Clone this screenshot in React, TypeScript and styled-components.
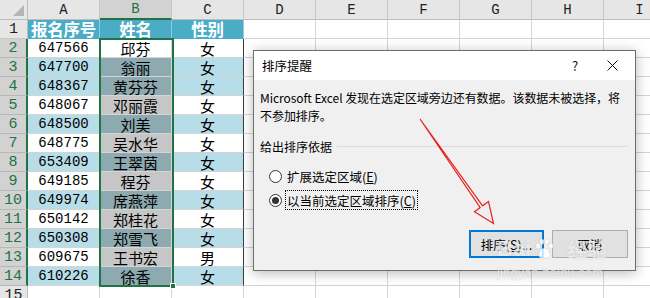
import styled, { createGlobalStyle } from "styled-components";

const GlobalStyle = createGlobalStyle`
  html, body {
    margin: 0;
    padding: 0;
    width: 650px;
    height: 298px;
    overflow: hidden;
    background: #ffffff;
  }
  * { box-sizing: border-box; }
`;

const GREEN = "#217346";
const GRID = "#d4d4d4";
const TEAL = "#4bacc6";
const BAND = "#b7dde8";

const rows = [
  ["647566", "邱芬", "女"],
  ["647700", "翁丽", "女"],
  ["648367", "黄芬芬", "女"],
  ["648067", "邓丽霞", "女"],
  ["648500", "刘美", "女"],
  ["648775", "吴水华", "女"],
  ["653409", "王翠茵", "女"],
  ["649185", "程芬", "女"],
  ["649974", "席燕萍", "女"],
  ["650142", "郑桂花", "女"],
  ["650308", "郑雪飞", "女"],
  ["609675", "王书宏", "男"],
  ["610226", "徐香", "女"],
];

const columns = ["A", "B", "C", "D", "E", "F", "G", "H", "I"];

const Stage = styled.div`
  position: relative;
  width: 650px;
  height: 298px;
  overflow: hidden;
`;

const Sheet = styled.div`
  display: grid;
  grid-template-columns: 28px repeat(9, 72px);
  grid-template-rows: 20px repeat(15, 19px);
`;

const Corner = styled.div`
  position: relative;
  background: #e6e6e6;
  border-right: 1px solid #bdbdbd;
  border-bottom: 1px solid #bdbdbd;
  &::after {
    content: "";
    position: absolute;
    right: 3px;
    bottom: 3px;
    width: 0;
    height: 0;
    border-left: 11px solid transparent;
    border-bottom: 11px solid #b5b5b5;
  }
`;

const ColHeader = styled.div<{ $active?: boolean }>`
  display: flex;
  align-items: center;
  justify-content: center;
  line-height: 1;
  background: ${(p) => (p.$active ? "#d2d2d2" : "#e6e6e6")};
  color: ${(p) => (p.$active ? GREEN : "#222")};
  border-right: 1px solid #c8c8c8;
  border-bottom: ${(p) => (p.$active ? `2px solid ${GREEN}` : "1px solid #bdbdbd")};
  font-family: "Liberation Mono", monospace;
  font-size: 14px;
`;

const RowHeader = styled.div<{ $active?: boolean }>`
  display: flex;
  align-items: center;
  justify-content: center;
  line-height: 1;
  background: ${(p) => (p.$active ? "#d2d2d2" : "#e6e6e6")};
  color: ${(p) => (p.$active ? GREEN : "#222")};
  border-bottom: 1px solid ${(p) => (p.$active ? "#b8b8b8" : "#c8c8c8")};
  border-right: ${(p) => (p.$active ? `2px solid ${GREEN}` : "1px solid #bdbdbd")};
  font-family: "Liberation Mono", monospace;
  font-size: 15px;
`;

const TitleCell = styled.div`
  display: flex;
  align-items: center;
  justify-content: center;
  line-height: 1;
  background: ${TEAL};
  color: #ffffff;
  font-family: "Noto Sans CJK SC", sans-serif;
  font-weight: 700;
  font-size: 16.5px;
  letter-spacing: -0.3px;
  border-right: 1px solid #8fcbdc;
  white-space: nowrap;
`;

const Cell = styled.div<{ $bg?: string; $num?: boolean; $edge?: boolean }>`
  display: flex;
  align-items: center;
  justify-content: center;
  line-height: 1;
  background: ${(p) => p.$bg ?? "#ffffff"};
  border-right: 1px solid ${(p) => (p.$edge ? "#3c3c3c" : GRID)};
  border-bottom: 1px solid ${GRID};
  color: #000;
  font-family: ${(p) =>
    p.$num ? '"Liberation Mono", monospace' : '"Noto Sans CJK SC", sans-serif'};
  font-size: ${(p) => (p.$num ? "14px" : "15px")};
  white-space: nowrap;
`;

const Selection = styled.div`
  position: absolute;
  left: 99px;
  top: 38px;
  width: 75px;
  height: 249px;
  border: 2px solid ${GREEN};
  pointer-events: none;
`;

const FillHandle = styled.div`
  position: absolute;
  left: 170px;
  top: 283px;
  width: 6px;
  height: 6px;
  background: ${GREEN};
  border: 1px solid #ffffff;
`;

const Dialog = styled.div`
  position: absolute;
  left: 253px;
  top: 50px;
  width: 383px;
  height: 221px;
  border: 1px solid #6e6e6e;
  background: #f0f0f0;
  box-shadow: 0 2px 12px rgba(0, 0, 0, 0.28);
  display: flex;
  flex-direction: column;
  font-family: "Noto Sans CJK SC", sans-serif;
  font-size: 12px;
  color: #000;
`;

const TitleBar = styled.div`
  height: 29px;
  background: #ffffff;
  display: flex;
  align-items: center;
  padding-left: 8px;
`;

const TitleText = styled.span`
  flex: 1;
  font-size: 12.5px;
`;

const TitleButton = styled.span<{ $w: number }>`
  width: ${(p) => p.$w}px;
  display: flex;
  justify-content: center;
  font-size: 13px;
  color: #111;
`;

const Body = styled.div`
  flex: 1;
  display: flex;
  flex-direction: column;
  padding: 9px 7px 0 6px;
`;

const Message = styled.p`
  margin: 0;
  line-height: 17.5px;
  letter-spacing: -0.05px;
`;

const GroupLabel = styled.div`
  display: flex;
  align-items: center;
  margin-top: 13px;
  height: 18px;
  &::after {
    content: "";
    flex: 1;
    height: 1px;
    background: #dcdcdc;
    margin-left: 5px;
  }
`;

const Options = styled.div`
  display: flex;
  flex-direction: column;
  gap: 2px;
  margin-top: 10px;
  padding-left: 9px;
`;

const OptionRow = styled.div`
  display: flex;
  align-items: center;
  height: 22px;
  gap: 3px;
`;

const Radio = styled.span<{ $checked?: boolean }>`
  width: 13px;
  height: 13px;
  border-radius: 50%;
  border: 1px solid #333;
  background: #fff;
  display: flex;
  align-items: center;
  justify-content: center;
  &::after {
    content: "";
    width: 7px;
    height: 7px;
    border-radius: 50%;
    background: ${(p) => (p.$checked ? "#333" : "transparent")};
  }
`;

const OptionLabel = styled.span<{ $focused?: boolean }>`
  display: flex;
  align-items: center;
  height: 20px;
  padding: 0 1px;
  border: 1px dotted ${(p) => (p.$focused ? "#000" : "transparent")};
  font-size: 12.5px;
`;

const Key = styled.span`
  text-decoration: underline;
`;

const Buttons = styled.div`
  display: flex;
  justify-content: flex-end;
  gap: 8px;
  margin-top: 19px;
`;

const Button = styled.div<{ $primary?: boolean }>`
  width: ${(p) => (p.$primary ? 75 : 76)}px;
  height: 28px;
  display: flex;
  align-items: center;
  justify-content: center;
  background: #e1e1e1;
  border: ${(p) => (p.$primary ? "2px solid #0078d7" : "1px solid #adadad")};
  font-size: 12.5px;
`;

const Arrow = styled.svg`
  position: absolute;
  left: 0;
  top: 0;
  pointer-events: none;
`;

const Watermark = styled.div`
  position: absolute;
  left: 497px;
  top: 236px;
  display: flex;
  flex-direction: column;
  align-items: flex-start;
  color: rgba(255, 255, 255, 0.72);
  text-shadow: 0 0 1px rgba(0, 0, 0, 0.2);
  pointer-events: none;
`;

const Brand = styled.div`
  display: flex;
  align-items: center;
  gap: 2px;
  font-family: "Liberation Sans", sans-serif;
  font-weight: 700;
  font-size: 22px;
  height: 26px;
`;

const BrandCn = styled.span`
  font-family: "Noto Sans CJK SC", sans-serif;
  font-weight: 700;
  font-size: 20px;
  margin-left: 10px;
`;

const Url = styled.div`
  font-family: "Liberation Sans", sans-serif;
  font-size: 12.5px;
  letter-spacing: 0.3px;
  margin-top: 4px;
`;

function bandFor(rowNum: number) {
  return rowNum === 3 || (rowNum >= 4 && rowNum % 2 === 0);
}

export default function App() {
  return (
    <Stage>
      <GlobalStyle />
      <Sheet>
        <Corner />
        {columns.map((c) => (
          <ColHeader key={c} $active={c === "B"}>
            {c}
          </ColHeader>
        ))}

        <RowHeader>1</RowHeader>
        <TitleCell>报名序号</TitleCell>
        <TitleCell>姓名</TitleCell>
        <TitleCell>性别</TitleCell>
        {columns.slice(3).map((c) => (
          <Cell key={"1" + c} />
        ))}

        {rows.map((r, i) => {
          const rowNum = i + 2;
          const band = bandFor(rowNum);
          const base = band ? BAND : "#ffffff";
          const sel = rowNum === 2 ? "#ffffff" : band ? "#8eaab1" : "#c6c6c6";
          return [
            <RowHeader key={"h" + rowNum} $active>
              {rowNum}
            </RowHeader>,
            <Cell key={"a" + rowNum} $bg={base} $num>
              {r[0]}
            </Cell>,
            <Cell key={"b" + rowNum} $bg={sel}>
              {r[1]}
            </Cell>,
            <Cell key={"c" + rowNum} $bg={base} $edge>
              {r[2]}
            </Cell>,
            ...columns.slice(3).map((c) => <Cell key={rowNum + c} />),
          ];
        })}

        <RowHeader>15</RowHeader>
        {columns.map((c) => (
          <Cell key={"15" + c} />
        ))}
      </Sheet>

      <Selection />
      <FillHandle />

      <Dialog>
        <TitleBar>
          <TitleText>排序提醒</TitleText>
          <TitleButton $w={28}>?</TitleButton>
          <TitleButton $w={46}>
            <svg width="11" height="11" viewBox="0 0 11 11">
              <path d="M0.5 0.5 L10.5 10.5 M10.5 0.5 L0.5 10.5" stroke="#111" strokeWidth="1" />
            </svg>
          </TitleButton>
        </TitleBar>
        <Body>
          <Message>
            Microsoft Excel 发现在选定区域旁边还有数据。该数据未被选择，将
            <br />
            不参加排序。
          </Message>
          <GroupLabel>给出排序依据</GroupLabel>
          <Options>
            <OptionRow>
              <Radio />
              <OptionLabel>
                扩展选定区域(<Key>E</Key>)
              </OptionLabel>
            </OptionRow>
            <OptionRow>
              <Radio $checked />
              <OptionLabel $focused>
                以当前选定区域排序(<Key>C</Key>)
              </OptionLabel>
            </OptionRow>
          </Options>
          <Buttons>
            <Button $primary>
              排序(<Key>S</Key>)...
            </Button>
            <Button>取消</Button>
          </Buttons>
        </Body>
      </Dialog>

      <Arrow width="650" height="298" viewBox="0 0 650 298">
        <polygon
          points="420,119 482.6,205.8 488.5,201.5 493.5,223.5 474.5,211.8 480.2,207.6"
          fill="none"
          stroke="#e8231f"
          strokeWidth="1.2"
          strokeLinejoin="miter"
        />
      </Arrow>

      <Watermark>
        <Brand>
          Bai
          <svg width="22" height="22" viewBox="0 0 22 22">
            <g fill="rgba(255,255,255,0.8)" stroke="rgba(0,0,0,0.15)" strokeWidth="0.6">
              <ellipse cx="5" cy="8" rx="2.4" ry="3" />
              <ellipse cx="9" cy="3.8" rx="2.2" ry="2.8" />
              <ellipse cx="14" cy="3.8" rx="2.2" ry="2.8" />
              <ellipse cx="18" cy="8" rx="2.4" ry="3" />
              <path d="M11.5 10 C7 10 5 16 6 18.5 C7 21 10 20 11.5 20 C13 20 16 21 17 18.5 C18 16 16 10 11.5 10 Z" />
            </g>
          </svg>
          <BrandCn>经验</BrandCn>
        </Brand>
        <Url>jingyan.baidu.com</Url>
      </Watermark>
    </Stage>
  );
}
